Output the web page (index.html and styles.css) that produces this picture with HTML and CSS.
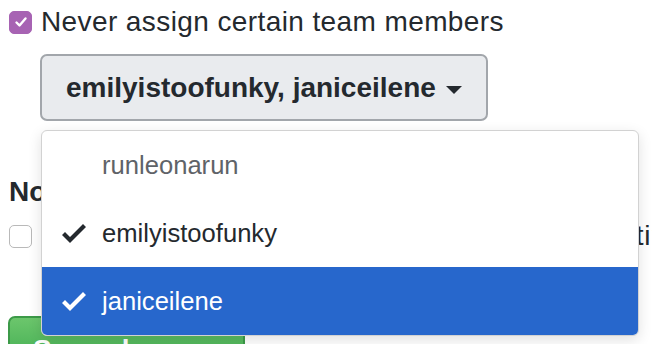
FILE: index.html
```html
<!DOCTYPE html>
<html lang="en">
<head>
    <meta charset="UTF-8">
    <meta name="viewport" content="width=device-width, initial-scale=1.0">
    <title>Code review assignment</title>
    <link rel="stylesheet" href="styles.css">
</head>
<body>

    <div class="settings">
        <!-- exclude members -->
        <label class="check-row">
            <span class="checkbox checked">
                <svg width="16" height="16" viewBox="0 0 16 16"><path d="M3.5 8.5l3 3 6-7" fill="none" stroke="#fff" stroke-width="2.4" stroke-linecap="round" stroke-linejoin="round"/></svg>
            </span>
            <span>Never assign certain team members</span>
        </label>

        <div class="select-menu">
            <button class="select-button">emilyistoofunky, janiceilene <span class="caret"></span></button>

            <div class="select-list">
                <div class="select-item muted">
                    <span class="item-check"></span>
                    <span>runleonarun</span>
                </div>
                <div class="select-item">
                    <span class="item-check">
                        <svg width="24" height="32" viewBox="0 0 12 16"><path d="M12 5l-8 8-4-4 1.5-1.5L4 10l6.5-6.5L12 5z" fill="currentColor"/></svg>
                    </span>
                    <span>emilyistoofunky</span>
                </div>
                <div class="select-item selected">
                    <span class="item-check">
                        <svg width="24" height="32" viewBox="0 0 12 16"><path d="M12 5l-8 8-4-4 1.5-1.5L4 10l6.5-6.5L12 5z" fill="currentColor"/></svg>
                    </span>
                    <span>janiceilene</span>
                </div>
            </div>
        </div>

        <!-- notifications -->
        <h3 class="section-title">Notifications</h3>
        <label class="check-row notify-row">
            <span class="checkbox"></span>
            <span>If assigning team members, don't notify the entire team</span>
        </label>

        <button class="save-button">Save changes</button>
    </div>

</body>
</html>
```

FILE: styles.css
```css
/* base */
body {
    margin: 0;
    font-family: 'Liberation Sans', Arial, sans-serif;
    color: #24292e;
    background: #fff;
    overflow: hidden;
    height: 344px;
}

.settings {
    padding: 4px 0 0 9px;
}

/* checkbox rows */
.check-row {
    display: flex;
    align-items: center;
    gap: 9px;
    font-size: 28px;
    line-height: 36px;
    letter-spacing: 0.4px;
    white-space: nowrap;
}

.checkbox {
    width: 21px;
    height: 21px;
    flex: none;
    border: 1px solid #b9b9b9;
    border-radius: 5px;
    background: #fff;
    display: flex;
    align-items: center;
    justify-content: center;
}

.checkbox.checked {
    background: #a763b3;
    border-color: #a763b3;
}

/* dropdown */
.select-menu {
    position: relative;
    margin: 14px 0 0 31px;
}

.select-button {
    height: 67px;
    padding: 0 24px 0 24px;
    font-family: inherit;
    font-size: 28px;
    font-weight: bold;
    color: #24292e;
    background: #e9ebee;
    border: 2px solid #a2a6ab;
    border-radius: 7px;
    display: flex;
    align-items: center;
    gap: 10px;
}

.caret {
    display: inline-block;
    border-top: 8px solid #24292e;
    border-left: 8px solid transparent;
    border-right: 8px solid transparent;
    margin-top: 4px;
}

.select-list {
    position: absolute;
    top: 76px;
    left: 1px;
    width: 596px;
    background: #fff;
    border: 1px solid #d2d2d2;
    border-radius: 6px;
    box-shadow: 0 4px 14px rgba(0, 0, 0, 0.12);
    overflow: hidden;
    z-index: 2;
}

.select-item {
    height: 68px;
    display: flex;
    align-items: center;
    font-size: 25.6px;
    color: #24292e;
}

.select-item.muted {
    color: #5f6368;
}

.select-item.selected {
    background: #2767cc;
    color: #fff;
}

.item-check {
    width: 24px;
    height: 32px;
    margin: 0 16px 0 20px;
    display: flex;
}

/* notifications */
.section-title {
    margin: 53px 0 0;
    font-size: 28px;
    line-height: 36px;
    font-weight: bold;
}

.notify-row {
    margin-top: 8px;
    letter-spacing: 0.5px;
}

.save-button {
    margin-top: 62px;
    height: 67px;
    width: 237px;
    padding: 0;
    margin-left: -1px;
    font-family: inherit;
    font-size: 28px;
    font-weight: bold;
    color: #fff;
    background: linear-gradient(#6cc66c, #2fa347);
    border: 2px solid #3c9a48;
    border-radius: 7px;
}
```
